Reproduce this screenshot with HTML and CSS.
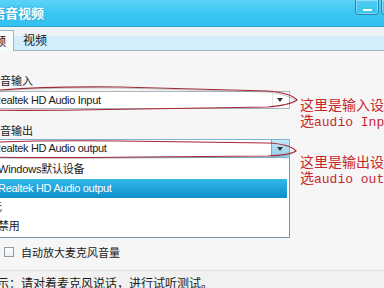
FILE: index.html
```html
<!DOCTYPE html>
<html lang="zh-CN">

<head>
  <meta charset="utf-8">
  <link rel="stylesheet" href="styles.css">
</head>

<body>
  <div class="window">
    <div class="titlebar">
      <span class="title">语音视频</span>
      <div class="winbtns">
        <span class="winbtn min"></span>
        <span class="winbtn close"></span>
      </div>
    </div>
    <div class="tabs">
      <span class="tab active">音频</span>
      <span class="tab">视频</span>
    </div>
    <div class="content">
      <div class="label">语音输入</div>
      <div class="select">
        <span class="select-text">Realtek HD Audio Input</span>
        <span class="select-btn"></span>
      </div>
      <div class="label label-out">语音输出</div>
      <div class="select focus">
        <span class="select-text">Realtek HD Audio output</span>
        <span class="select-btn"></span>
      </div>
      <ul class="options">
        <li>Windows默认设备</li>
        <li class="selected">Realtek HD Audio output</li>
        <li class="shift">无</li>
        <li>禁用</li>
      </ul>
      <label class="check">
        <span class="check-box"></span>自动放大麦克风音量
      </label>
    </div>
    <div class="tip">提示：请对着麦克风说话，进行试听测试。</div>
  </div>

  <!-- 标注 -->
  <svg class="marks" width="384" height="288" viewBox="0 0 384 288">
    <path d="M297 100 Q 291 93 268 91 L 120 87 Q 30 86 -20 92 L -20 110 Q 40 111 140 109 L 268 107 Q 290 105 297 100 Z" />
    <path class="shade" d="M296 101 Q 288 94 266 92 L 120 88 Q 30 87 -20 93" />
    <path d="M296 151 Q 290 144 268 143 L 120 141 Q 30 140 -20 143 L -20 157 Q 40 158 140 157 L 268 156 Q 290 155 296 151 Z" />
    <path class="shade" d="M295 152 Q 288 157 266 157 L 140 158 Q 40 159 -20 158" />
  </svg>
  <div class="note note-in">这里是输入设备<br>选<span class="mono">audio Input</span></div>
  <div class="note note-out">这里是输出设备<br>选<span class="mono">audio output</span></div>
</body>

</html>
```

FILE: styles.css
```css
* {
  box-sizing: border-box;
}

body {
  margin: 0;
  width: 384px;
  height: 288px;
  overflow: hidden;
  position: relative;
  background: #f6f6f6;
  color: #1a1a1a;
  font: 11px/14px "Liberation Sans", "Noto Sans CJK SC", sans-serif;
}
/* window */

.window {
  margin-left: -30px;
  width: 414px;
}

.titlebar {
  height: 27px;
  display: flex;
  background: linear-gradient(#5cd3f8, #3cc7f3 50%, #32c0ef);
  border-bottom: 1px solid #2aa2d2;
}

.title {
  padding: 5px 0 0 22px;
  color: #fff;
  font: bold 13px/16px "Noto Sans CJK SC", sans-serif;
  text-shadow: 0 0 2px #1d94c4;
}

.winbtns {
  display: flex;
  gap: 2px;
  margin-left: auto;
  margin-right: -21px;
}

.winbtn {
  position: relative;
  width: 24px;
  height: 16px;
  margin-top: -1px;
  border: 1px solid #2486b6;
  border-radius: 0 0 3px 3px;
  background: linear-gradient(#52cff6, #38c2ee);
  box-shadow: inset 0 0 0 1px rgba(255, 255, 255, .35);
}

.min::after {
  content: "";
  position: absolute;
  left: 7px;
  top: 9px;
  width: 9px;
  height: 2px;
  background: #fff;
}
/* tabs */

.tabs {
  height: 24px;
  display: flex;
  align-items: flex-end;
  background: linear-gradient(#eef2f4 0, #eef2f4 9px, #d3eefa 9px);
  border-bottom: 1px solid #9db7c3;
}

.tab {
  height: 20px;
  padding: 3px 4px 0 9px;
  font: 12px/14px "Noto Sans CJK SC", sans-serif;
  color: #111;
}

.tab.active {
  height: 21px;
  margin-bottom: -1px;
  padding-left: 11px;
  padding-right: 7px;
  background: #f8fbfc;
  border: 1px solid #9db7c3;
  border-bottom: none;
}
/* form */

.content {
  padding-top: 22px;
}

.label {
  padding-left: 19px;
  font-family: "Noto Sans CJK SC", sans-serif;
}

.label-out {
  margin-top: 14px;
}

.select {
  display: flex;
  width: 320px;
  height: 18px;
  margin-top: 4px;
  background: #fff;
  border: 1px solid #aab3bb;
}

.select-text {
  flex: 1;
  padding-left: 22px;
  line-height: 16px;
  letter-spacing: -.3px;
}

.select-btn {
  position: relative;
  width: 17px;
  border-left: 1px solid #e4e8eb;
}

.select-btn::after {
  content: "";
  position: absolute;
  left: 4px;
  top: 6px;
  border: 3px solid transparent;
  border-top: 4px solid #333;
}

.select.focus {
  height: 19px;
  margin-top: 2px;
  border-color: #7cb6d6;
}

.focus .select-btn {
  width: 18px;
  border-left-color: #6aaccc;
  background: linear-gradient(#c6e8f6, #93cde7);
}

.focus .select-btn::after {
  left: 5px;
  top: 7px;
}

.options {
  width: 320px;
  margin: 0;
  padding: 2px 0 1px;
  list-style: none;
  background: #fff;
  border: 1px solid #7896a6;
  border-top: none;
}

.options li {
  height: 19px;
  margin-right: 2px;
  padding-left: 27px;
  line-height: 19px;
  letter-spacing: -.2px;
}

.options .selected {
  color: #fff;
  background: linear-gradient(#33b9e9, #0c8ecb);
  letter-spacing: -.3px;
}

.options .shift {
  padding-left: 20px;
}

.check {
  display: flex;
  align-items: center;
  gap: 7px;
  height: 14px;
  margin-top: 7px;
  padding-left: 34px;
  font-family: "Noto Sans CJK SC", sans-serif;
}

.check-box {
  width: 10px;
  height: 10px;
  border: 1px solid #8f9ba6;
  background: linear-gradient(#fff, #eceff1);
}

.tip {
  height: 30px;
  margin-top: 11px;
  padding: 5px 0 0 15px;
  border-top: 1px solid #e2e2e2;
  background: #f1f1f1;
  font: 12px/14px "Noto Sans CJK SC", sans-serif;
}
/* annotations */

.marks {
  position: absolute;
  left: 0;
  top: 0;
  fill: none;
  stroke: #a52838;
  stroke-width: 1.2;
}

.marks .shade {
  stroke: #8a8a8a;
  stroke-width: .8;
  opacity: .6;
}

.note {
  position: absolute;
  left: 300px;
  white-space: nowrap;
  color: #c8262e;
  font: 14px/16px "Noto Sans CJK SC", sans-serif;
}

.note-in {
  top: 96px;
}

.note-out {
  top: 153px;
}

.mono {
  font: 13px/16px "Liberation Mono", monospace;
}
```
